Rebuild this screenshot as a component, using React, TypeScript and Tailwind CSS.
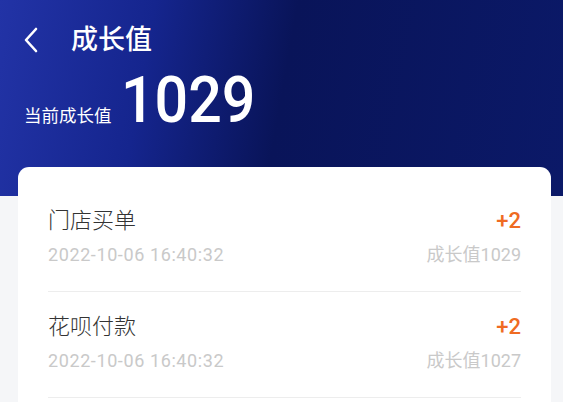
const records = [
  { title: "门店买单", time: "2022-10-06 16:40:32", delta: "+2", total: 1029 },
  { title: "花呗付款", time: "2022-10-06 16:40:32", delta: "+2", total: 1027 },
];

export default function App() {
  return (
    <div
      className="w-[563px] h-[402px] overflow-hidden bg-[#f5f6f8]"
      style={{ fontFamily: 'Roboto, "Noto Sans CJK SC", sans-serif' }}
    >
      <div className="h-[196px] bg-[linear-gradient(100deg,#2233a6_0%,#15258e_26%,#091459_50%,#0b1968_100%)] text-white">
        <div className="flex items-center h-[40px] pt-[20px] box-content pl-[22px]">
          <svg width="18" height="26" viewBox="0 0 18 26" fill="none">
            <path d="M14 2 L4 13 L14 24" stroke="white" strokeWidth="2.6" strokeLinecap="round" strokeLinejoin="round" />
          </svg>
          <span className="ml-[31px] text-[27px] font-medium leading-none">成长值</span>
        </div>
        <div className="flex items-baseline pl-[24px] mt-[9px]">
          <span className="text-[17.5px] leading-none">当前成长值</span>
          <span className="ml-[9px] inline-block origin-left scale-x-[0.91] text-[65px] font-medium leading-[62px]">
            1029
          </span>
        </div>
      </div>
      <div className="ml-[18px] mr-[12px] mt-[-29px] rounded-[11px] bg-white px-[30px] pt-[19px] pb-[40px]">
        {records.map((r, i) => (
          <div key={i} className="pt-[19px] pb-[25px] border-b border-[#ededed]">
            <div className="flex items-center justify-between h-[30px]">
              <span className="text-[22px] font-light text-[#333333]">{r.title}</span>
              <span className="text-[22px] font-medium text-[#ef6b22]">{r.delta}</span>
            </div>
            <div className="mt-[7px] flex items-center justify-between h-[24px] text-[18px] text-[#c9c9c9]">
              <span className="tracking-[0.6px]">{r.time}</span>
              <span>成长值{r.total}</span>
            </div>
          </div>
        ))}
      </div>
    </div>
  );
}
